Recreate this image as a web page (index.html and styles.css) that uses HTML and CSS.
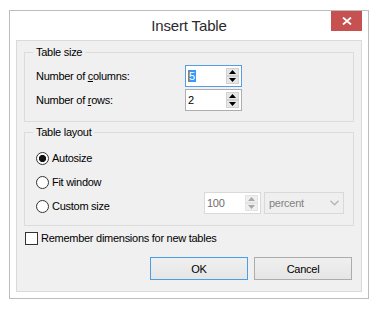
FILE: index.html
```html
<!DOCTYPE html>
<html>
<head>
<meta charset="utf-8">
<link rel="stylesheet" href="styles.css">
</head>
<body>
<div class="dialog">
  <div class="titlebar">
    <span></span>
    <span class="title">Insert Table</span>
    <span class="close-cell">
      <span class="close">
        <svg width="10" height="8" viewBox="0 0 10 8"><path d="M1 0.5 L9 7.5 M9 0.5 L1 7.5" stroke="#fff" stroke-width="1.8" fill="none"/></svg>
      </span>
    </span>
  </div>
  <div class="client">
    <fieldset class="group g1">
      <legend>Table size</legend>
      <div class="field-row">
        <span class="field-label">Number of <u>c</u>olumns:</span>
        <div class="spin focused">
          <span class="spin-text"><span class="sel">5</span></span>
          <span class="spin-btns"><span class="sb up"></span><span class="sb down"></span></span>
        </div>
      </div>
      <div class="field-row">
        <span class="field-label">Number of <u>r</u>ows:</span>
        <div class="spin">
          <span class="spin-text">2</span>
          <span class="spin-btns"><span class="sb up"></span><span class="sb down"></span></span>
        </div>
      </div>
    </fieldset>
    <fieldset class="group g2">
      <legend>Table layout</legend>
      <div class="radio-row"><span class="radio checked"></span><span>Autosize</span></div>
      <div class="radio-row"><span class="radio"></span><span>Fit window</span></div>
      <div class="custom-row">
        <div class="radio-row"><span class="radio"></span><span>Custom size</span></div>
        <div class="controls">
          <div class="spin disabled">
            <span class="spin-text">100</span>
            <span class="spin-btns"><span class="sb up"></span><span class="sb down"></span></span>
          </div>
          <div class="combo disabled">
            <span>percent</span>
            <svg width="9" height="6" viewBox="0 0 9 6"><path d="M0.5 0.8 L4.5 4.8 L8.5 0.8" stroke="#b4b4b4" stroke-width="1.3" fill="none"/></svg>
          </div>
        </div>
      </div>
    </fieldset>
    <div class="check-row"><span class="checkbox"></span><span>Remember dimensions for new tables</span></div>
    <div class="button-row">
      <button class="btn default">OK</button>
      <button class="btn">Cancel</button>
    </div>
  </div>
</div>
</body>
</html>
```

FILE: styles.css
```css
body {
  margin: 0;
  background: #fff;
  font-family: "Liberation Sans", Arial, sans-serif;
  font-size: 11px;
  letter-spacing: -0.27px;
  color: #000;
}

.dialog {
  margin: 10px 0 0 9px;
  width: 360px;
  height: 289px;
  box-sizing: border-box;
  border: 1px solid #bcbcbc;
  background: #fff;
  display: flex;
  flex-direction: column;
}

.titlebar {
  height: 29px;
  display: grid;
  grid-template-columns: 1fr auto 1fr;
  flex: none;
}

.title {
  font-size: 15px;
  line-height: 29px;
  color: #2b2b2b;
  letter-spacing: -0.15px;
}

.close-cell {
  display: flex;
  justify-content: flex-end;
  align-items: flex-start;
  padding-right: 6px;
}

.close {
  width: 31px;
  height: 20px;
  background: #c75050;
  display: flex;
  align-items: center;
  justify-content: center;
}

.close svg { display: block; margin-left: 1px; }

.client {
  margin: 0 6px;
  height: 252px;
  box-sizing: border-box;
  border: 1px solid #dadada;
  background: #f0f0f0;
  display: flex;
  flex-direction: column;
  flex: none;
}

.group {
  margin: 4px 7px 0;
  padding: 5px 0 10px 11px;
  border: 1px solid #dcdcdc;
  min-width: 0;
  display: flex;
  flex-direction: column;
}

.group legend {
  padding: 0 3px;
  margin-left: -3px;
  height: 15px;
  line-height: 15px;
}

.g1 { gap: 2px; }

.g2 {
  margin-top: 3px;
  padding: 10px 9px 11px 11px;
}

.field-row {
  display: flex;
  align-items: center;
  height: 22px;
}

.field-label {
  width: 149px;
  flex: none;
}

.spin {
  width: 57px;
  height: 22px;
  box-sizing: border-box;
  border: 1px solid #abadb3;
  background: #fff;
  display: flex;
  align-items: center;
  justify-content: space-between;
  padding: 0 2px 0 2px;
  flex: none;
}

.spin.focused { border-color: #569de5; }

.spin.disabled { border-color: #d9d9d9; color: #6d6d6d; }

.spin-text { line-height: 16px; }

.sel {
  background: #3399ff;
  color: #fff;
  border-left: 1px solid #d66a10;
  padding: 0 1px 0 0;
}

.spin-btns {
  display: flex;
  flex-direction: column;
  width: 13px;
  height: 16px;
}

.sb {
  height: 8px;
  box-sizing: border-box;
  border: 1px solid #d2d2d2;
  background: #e6e6e6;
  display: flex;
  align-items: center;
  justify-content: center;
}

.sb::after {
  content: "";
  width: 7px;
  height: 4px;
  background: #000;
}

.sb.up::after { clip-path: polygon(50% 0, 100% 100%, 0 100%); }
.sb.down::after { clip-path: polygon(0 0, 100% 0, 50% 100%); }

.disabled .sb { border-color: #e4e4e4; background: #efefef; }
.disabled .sb::after { background: #a8a8a8; }

.radio-row {
  display: flex;
  align-items: center;
  gap: 3px;
  height: 16px;
}

.g2 > .radio-row + .radio-row { margin-top: 8px; }

.radio {
  width: 13px;
  height: 13px;
  box-sizing: border-box;
  border: 1px solid #333;
  border-radius: 50%;
  background: #fff;
  flex: none;
}

.radio.checked {
  background: radial-gradient(circle, #111 0 3.3px, #fff 3.9px);
}

.custom-row {
  margin-top: 2px;
  height: 22px;
  display: flex;
  align-items: flex-end;
  justify-content: space-between;
}

.controls {
  display: flex;
  gap: 3px;
  align-self: stretch;
}

.combo {
  width: 80px;
  height: 22px;
  box-sizing: border-box;
  border: 1px solid #d9d9d9;
  background: #efefef;
  color: #838383;
  display: flex;
  align-items: center;
  justify-content: space-between;
  padding: 0 4px 0 4px;
}

.check-row {
  margin: 4px 0 0 8px;
  display: flex;
  align-items: center;
  gap: 3px;
  height: 16px;
}

.checkbox {
  width: 13px;
  height: 13px;
  box-sizing: border-box;
  border: 1px solid #333;
  background: #fff;
  flex: none;
}

.button-row {
  margin: 11px 9px 0 0;
  display: flex;
  justify-content: flex-end;
  gap: 6px;
}

.btn {
  width: 98px;
  height: 23px;
  box-sizing: border-box;
  border: 1px solid #acacac;
  background: linear-gradient(#f0f0f0, #e5e5e5);
  font: inherit;
  letter-spacing: inherit;
  color: #000;
  padding: 0;
  margin: 0;
}

.btn.default { border-color: #4a9ee8; }
```
